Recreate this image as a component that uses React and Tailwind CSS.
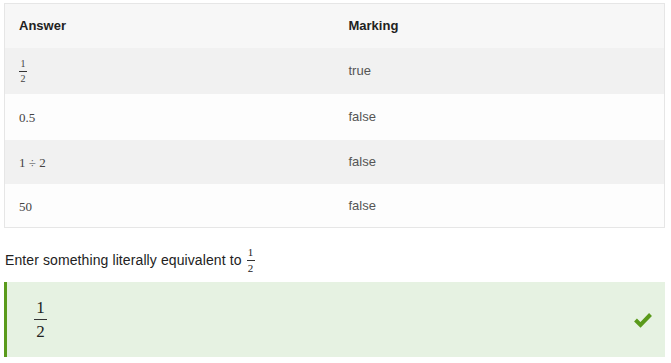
import React from "react";

function Frac({ num, den, size, lineW, gap = "gap-[1px]" }) {
  return (
    <span className={`inline-flex flex-col items-center align-middle ${gap}`} style={{ fontFamily: '"Liberation Serif", serif' }}>
      <span className={`${size} leading-none px-[1px]`}>{num}</span>
      <span className={`${lineW} h-px bg-[#333]`}></span>
      <span className={`${size} leading-none px-[1px]`}>{den}</span>
    </span>
  );
}

const rows = [
  { a: <Frac num="1" den="2" size="text-[10px]" lineW="w-[8px]" gap="gap-[2px]" />, m: "true", bg: "bg-[#f1f1f1]", h: "h-[46px]" },
  { a: <span className="text-[13px]" style={{ fontFamily: '"Liberation Serif", serif' }}>0.5</span>, m: "false", bg: "bg-[#fdfdfd]", h: "h-[46px]" },
  { a: <span className="text-[13px]" style={{ fontFamily: '"Liberation Serif", serif' }}>1 ÷ 2</span>, m: "false", bg: "bg-[#f1f1f1]", h: "h-[44px]" },
  { a: <span className="text-[13px]" style={{ fontFamily: '"Liberation Serif", serif' }}>50</span>, m: "false", bg: "bg-[#fdfdfd]", h: "h-[43px]" },
];

export default function App() {
  return (
    <div className="w-[671px] h-[363px] bg-white pt-[3px] pl-[4px] pr-[6px]" style={{ fontFamily: '"Liberation Sans", Arial, sans-serif' }}>
      <div className="border border-[#e6e6e6]">
        <div className="grid grid-cols-2 h-[44px] bg-[#f7f7f7] items-center text-[13px] font-bold text-[#222]">
          <div className="pl-[14px]">Answer</div>
          <div className="pl-[14px]">Marking</div>
        </div>
        {rows.map((r, i) => (
          <div key={i} className={`grid grid-cols-2 ${r.h} ${r.bg} items-center text-[#444]`}>
            <div className="pl-[14px] text-[#444]">{r.a}</div>
            <div className="pl-[14px] text-[13px] text-[#555]">{r.m}</div>
          </div>
        ))}
      </div>
      <div className="mt-[17px] h-[30px] flex items-center text-[14px] text-[#222] ml-[1px] gap-[5px]">
        <span className="tracking-[0.1px]">Enter something literally equivalent to</span>
        <Frac num="1" den="2" size="text-[11px]" lineW="w-[8px]" gap="gap-[2px]" />
      </div>
      <div className="mt-[7px] h-[75px] bg-[#e6f2e2] border-l-[3px] border-[#5a9a1b] flex items-center justify-between pl-[27px] pr-[12px]">
        <span className="text-[#222]">
          <Frac num="1" den="2" size="text-[17px]" lineW="w-[13px]" gap="gap-[3px]" />
        </span>
        <svg width="20" height="16" viewBox="0 0 20 16">
          <polyline points="2.5,8 7.5,13 17.5,2.5" fill="none" stroke="#5a9a1b" strokeWidth="4" strokeLinecap="butt" strokeLinejoin="miter" />
        </svg>
      </div>
    </div>
  );
}
